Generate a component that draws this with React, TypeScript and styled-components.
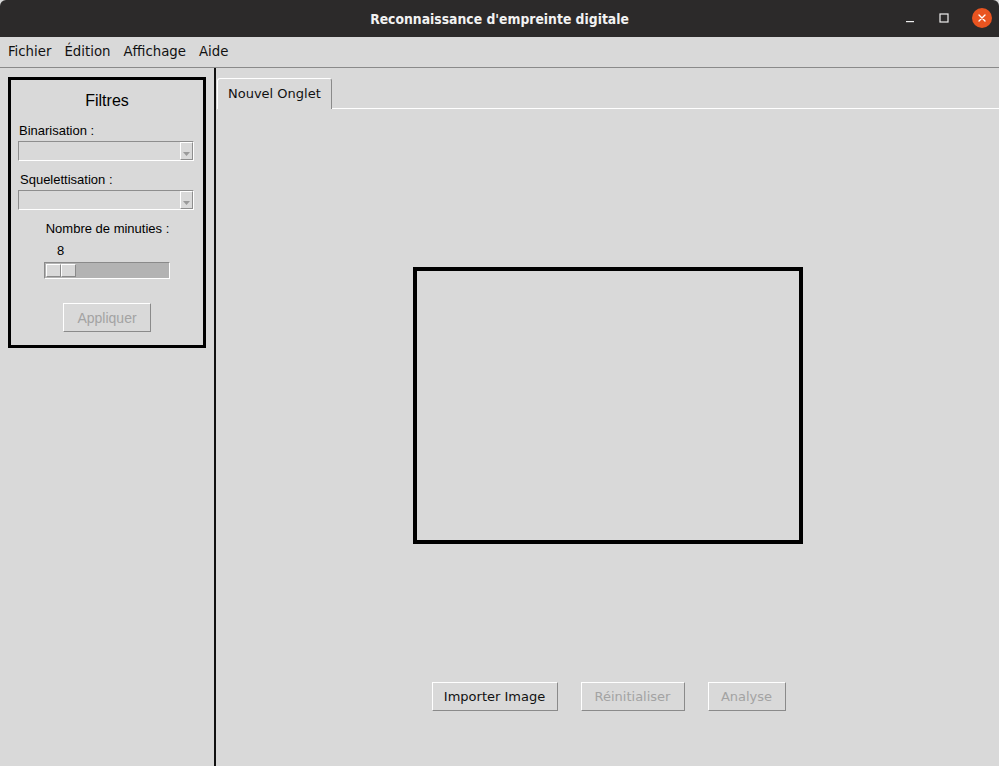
import React from 'react';
import styled, { createGlobalStyle } from 'styled-components';

const GlobalStyle = createGlobalStyle`
  html, body {
    margin: 0;
    padding: 0;
    background: #d9d9d9;
  }
  body {
    font-family: "Liberation Sans", Arial, sans-serif;
    color: #000;
  }
  #root {
    height: 766px;
  }
`;

const Window = styled.div`
  width: 999px;
  height: 766px;
  display: flex;
  flex-direction: column;
  background: #d9d9d9;
  overflow: hidden;
`;

const TitleBar = styled.div`
  height: 37px;
  flex: none;
  background: #2c2a2a;
  display: flex;
  align-items: center;
  justify-content: center;
  position: relative;
  border-radius: 6px 6px 0 0;
`;

const TitleText = styled.div`
  color: #f2f2f2;
  font-family: "DejaVu Sans Condensed", "DejaVu Sans", sans-serif;
  font-weight: bold;
  font-size: 13.8px;
`;

const WindowControls = styled.div`
  position: absolute;
  right: 7px;
  top: 0;
  height: 36px;
  display: flex;
  align-items: center;
  gap: 22px;
`;

const ControlIcon = styled.div`
  width: 12px;
  height: 12px;
  display: flex;
  align-items: center;
  justify-content: center;
`;

const CloseButton = styled.div`
  width: 20px;
  height: 20px;
  border-radius: 50%;
  background: #e95420;
  display: flex;
  align-items: center;
  justify-content: center;
`;

const MenuBar = styled.div`
  height: 31px;
  flex: none;
  display: flex;
  align-items: center;
  padding-left: 8px;
  padding-bottom: 3px;
  box-sizing: border-box;
  gap: 13px;
  border-bottom: 1px solid #8a8a8a;
  font-family: "DejaVu Sans Condensed", "DejaVu Sans", sans-serif;
  font-size: 14.8px;
`;

const MenuItem = styled.span`
  color: #111;
`;

const Body = styled.div`
  flex: 1;
  display: flex;
`;

const Sidebar = styled.div`
  width: 216px;
  flex: none;
  box-sizing: border-box;
  border-right: 2px solid #111;
  padding: 9px 0 0 8px;
`;

const FilterFrame = styled.div`
  width: 198px;
  height: 271px;
  box-sizing: border-box;
  border: 3px solid #000;
  display: flex;
  flex-direction: column;
  padding: 11px 0 0 7px;
`;

const FrameTitle = styled.div`
  font-size: 16px;
  text-align: center;
  padding-right: 7px;
  line-height: 19px;
  margin-bottom: 13px;
`;

const FieldLabel = styled.div<{ $center?: boolean; $indent?: number }>`
  font-size: 13px;
  line-height: 15px;
  margin-bottom: 3px;
  padding-left: ${p => p.$indent ?? 1}px;
  text-align: ${p => (p.$center ? 'center' : 'left')};
  padding-right: ${p => (p.$center ? 7 : 0)}px;
`;

const Combo = styled.div`
  width: 176px;
  height: 20px;
  box-sizing: border-box;
  border-top: 1px solid #8e8e8e;
  border-left: 1px solid #8e8e8e;
  border-bottom: 1px solid #fff;
  border-right: 1px solid #fff;
  display: flex;
  justify-content: flex-end;
  margin-bottom: 11px;
`;

const ComboArrow = styled.div`
  width: 13px;
  height: 18px;
  box-sizing: border-box;
  border-left: 1px solid #fff;
  border-top: 1px solid #fff;
  border-bottom: 1px solid #8e8e8e;
  border-right: 1px solid #8e8e8e;
  display: flex;
  align-items: flex-end;
  justify-content: center;
  padding-bottom: 3px;
`;

const SliderValue = styled.div`
  font-size: 13px;
  line-height: 15px;
  padding-left: 39px;
  margin: 4px 0 4px;
`;

const SliderTrough = styled.div`
  width: 126px;
  height: 17px;
  box-sizing: border-box;
  margin-left: 26px;
  background: #b3b3b3;
  border-top: 1px solid #8a8a8a;
  border-left: 1px solid #8a8a8a;
  border-bottom: 1px solid #fff;
  border-right: 1px solid #fff;
  display: flex;
  padding: 1px;
`;

const SliderKnob = styled.div`
  width: 15px;
  height: 13px;
  background: #d9d9d9;
  box-sizing: border-box;
  border-top: 1px solid #fff;
  border-left: 1px solid #fff;
  border-bottom: 1px solid #8a8a8a;
  border-right: 1px solid #8a8a8a;
`;

const ApplyRow = styled.div`
  display: flex;
  justify-content: center;
  padding-right: 7px;
  margin-top: 24px;
`;

const Button = styled.div<{ $disabled?: boolean; $width: number; $font?: string }>`
  width: ${p => p.$width}px;
  height: 29px;
  box-sizing: border-box;
  border-top: 1px solid #fff;
  border-left: 1px solid #fff;
  border-bottom: 1px solid #8a8a8a;
  border-right: 1px solid #8a8a8a;
  display: flex;
  align-items: center;
  justify-content: center;
  font-family: ${p => p.$font ?? '"DejaVu Sans", sans-serif'};
  font-size: ${p => (p.$font ? 14 : 13)}px;
  color: ${p => (p.$disabled ? '#a3a3a3' : '#111')};
`;

const Main = styled.div`
  flex: 1;
  display: flex;
  flex-direction: column;
  padding-top: 10px;
`;

const TabStrip = styled.div`
  display: flex;
  align-items: flex-end;
  padding-left: 1px;
  height: 31px;
`;

const Tab = styled.div`
  width: 115px;
  height: 31px;
  box-sizing: border-box;
  border-top: 1px solid #fff;
  border-left: 1px solid #fff;
  border-right: 1px solid #8a8a8a;
  border-radius: 3px 3px 0 0;
  display: flex;
  align-items: center;
  padding-left: 10px;
  padding-bottom: 2px;
  font-family: "DejaVu Sans", sans-serif;
  font-size: 13px;
  color: #111;
`;

const TabLine = styled.div`
  flex: 1;
  height: 1px;
  background: #fff;
`;

const TabPanel = styled.div`
  flex: 1;
  display: flex;
  flex-direction: column;
  align-items: center;
  padding-top: 158px;
`;

const ImageBox = styled.div`
  width: 390px;
  height: 277px;
  box-sizing: border-box;
  border: 4px solid #000;
  margin-left: 1px;
`;

const ButtonRow = styled.div`
  display: flex;
  gap: 23px;
  margin-top: 138px;
  margin-left: 2px;
`;

function ComboArrowIcon() {
  return (
    <svg width="7" height="4" viewBox="0 0 7 4">
      <path d="M0 0 L7 0 L3.5 4 Z" fill="#9a9a9a" />
    </svg>
  );
}

export default function App() {
  return (
    <Window>
      <GlobalStyle />
      <TitleBar>
        <TitleText>Reconnaissance d'empreinte digitale</TitleText>
        <WindowControls>
          <ControlIcon>
            <svg width="10" height="12" viewBox="0 0 10 12">
              <rect x="1" y="9" width="8" height="1.2" fill="#eee" />
            </svg>
          </ControlIcon>
          <ControlIcon>
            <svg width="10" height="10" viewBox="0 0 10 10">
              <rect x="1" y="1" width="8" height="8" fill="none" stroke="#eee" strokeWidth="1.2" />
            </svg>
          </ControlIcon>
          <CloseButton>
            <svg width="10" height="10" viewBox="0 0 10 10">
              <path d="M2 2 L8 8 M8 2 L2 8" stroke="#fff" strokeWidth="1.4" strokeLinecap="round" />
            </svg>
          </CloseButton>
        </WindowControls>
      </TitleBar>
      <MenuBar>
        <MenuItem>Fichier</MenuItem>
        <MenuItem>Édition</MenuItem>
        <MenuItem>Affichage</MenuItem>
        <MenuItem>Aide</MenuItem>
      </MenuBar>
      <Body>
        <Sidebar>
          <FilterFrame>
            <FrameTitle>Filtres</FrameTitle>
            <FieldLabel>Binarisation :</FieldLabel>
            <Combo>
              <ComboArrow>
                <ComboArrowIcon />
              </ComboArrow>
            </Combo>
            <FieldLabel $indent={2}>Squelettisation :</FieldLabel>
            <Combo>
              <ComboArrow>
                <ComboArrowIcon />
              </ComboArrow>
            </Combo>
            <FieldLabel $center>Nombre de minuties :</FieldLabel>
            <SliderValue>8</SliderValue>
            <SliderTrough>
              <SliderKnob />
              <SliderKnob />
            </SliderTrough>
            <ApplyRow>
              <Button $disabled $width={88} $font={'"Liberation Sans", Arial, sans-serif'}>
                Appliquer
              </Button>
            </ApplyRow>
          </FilterFrame>
        </Sidebar>
        <Main>
          <TabStrip>
            <Tab>Nouvel Onglet</Tab>
            <TabLine />
          </TabStrip>
          <TabPanel>
            <ImageBox />
            <ButtonRow>
              <Button $width={126}>Importer Image</Button>
              <Button $disabled $width={104}>Réinitialiser</Button>
              <Button $disabled $width={78}>Analyse</Button>
            </ButtonRow>
          </TabPanel>
        </Main>
      </Body>
    </Window>
  );
}
